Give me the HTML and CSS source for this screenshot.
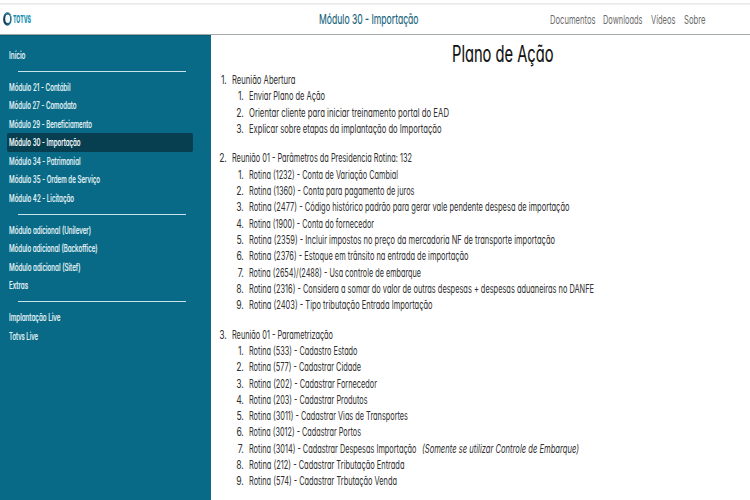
FILE: index.html
```html
<!DOCTYPE html>
<html lang="pt-BR">
<head>
<meta charset="utf-8">
<title>Módulo 30 - Importação</title>
<link rel="stylesheet" href="styles.css">
</head>
<body>
<header class="topbar">
  <div class="brand">
    <svg class="mark" viewBox="0 0 9 14"><defs><linearGradient id="g" x1="0" y1="0" x2="1" y2="1"><stop offset="0" stop-color="#174b70"/><stop offset=".5" stop-color="#173a52"/><stop offset="1" stop-color="#2198b5"/></linearGradient></defs><ellipse cx="4.4" cy="7" rx="4.3" ry="6.8" fill="url(#g)"/><path d="M1.2 3.5Q2.5 .7 5 .7Q7.6 1.6 8.2 5.5" fill="none" stroke="#4abacb" stroke-width=".8"/><ellipse cx="4.7" cy="6.7" rx="2.5" ry="4.3" fill="#f4fbfd"/></svg>
    <span class="brand-name" data-w="18">TOTVS</span>
  </div>
  <div class="module"><span data-w="99.5">Módulo 30 - Importação</span></div>
  <nav class="links"><span data-w="45.5">Documentos</span><span data-w="39.5">Downloads</span><span data-w="24.5">Vídeos</span><span data-w="21.5">Sobre</span></nav>
</header>
<div class="layout">
  <aside class="sidebar">
    <div class="item"><span data-w="16.5">Início</span></div>
    <hr>
    <div class="item"><span data-w="61.5">Módulo 21 - Contábil</span></div>
    <div class="item"><span data-w="67.5">Módulo 27 - Comodato</span></div>
    <div class="item"><span data-w="83">Módulo 29 - Beneficiamento</span></div>
    <div class="item active"><span data-w="71.5">Módulo 30 - Importação</span></div>
    <div class="item"><span data-w="71.5">Módulo 34 - Patrimonial</span></div>
    <div class="item"><span data-w="91">Módulo 35 - Ordem de Serviço</span></div>
    <div class="item"><span data-w="65">Módulo 42 - Licitação</span></div>
    <hr>
    <div class="item"><span data-w="82">Módulo adicional (Unilever)</span></div>
    <div class="item"><span data-w="88.5">Módulo adicional (Backoffice)</span></div>
    <div class="item"><span data-w="71.5">Módulo adicional (Sitef)</span></div>
    <div class="item"><span data-w="19">Extras</span></div>
    <hr>
    <div class="item"><span data-w="51.5">Implantação Live</span></div>
    <div class="item"><span data-w="29">Totvs Live</span></div>
  </aside>
  <main class="content">
    <h1><span data-w="101.5">Plano de Ação</span></h1>
    <section>
      <div class="row"><b>1.</b><span data-w="63.5">Reunião Abertura</span></div>
      <div class="row sub"><b>1.</b><span data-w="76">Enviar Plano de Ação</span></div>
      <div class="row sub"><b>2.</b><span data-w="200">Orientar cliente para iniciar treinamento portal do EAD</span></div>
      <div class="row sub"><b>3.</b><span data-w="192.5">Explicar sobre etapas da implantação do Importação</span></div>
    </section>
    <section>
      <div class="row"><b>2.</b><span data-w="180">Reunião 01 - Parâmetros da Presidencia Rotina: 132</span></div>
      <div class="row sub"><b>1.</b><span data-w="149">Rotina (1232) - Conta de Variação Cambial</span></div>
      <div class="row sub"><b>2.</b><span data-w="165.5">Rotina (1360) - Conta para pagamento de juros</span></div>
      <div class="row sub"><b>3.</b><span data-w="320.5">Rotina (2477) - Código histórico padrão para gerar vale pendente despesa de importação</span></div>
      <div class="row sub"><b>4.</b><span data-w="125">Rotina (1900) - Conta do fornecedor</span></div>
      <div class="row sub"><b>5.</b><span data-w="306">Rotina (2359) - Incluir impostos no preço da mercadoria NF de transporte importação</span></div>
      <div class="row sub"><b>6.</b><span data-w="219.5">Rotina (2376) - Estoque em trânsito na entrada de importação</span></div>
      <div class="row sub"><b>7.</b><span data-w="172">Rotina (2654)/(2488) - Usa controle de embarque</span></div>
      <div class="row sub"><b>8.</b><span data-w="345">Rotina (2316) - Considera a somar do valor de outras despesas + despesas aduaneiras no DANFE</span></div>
      <div class="row sub"><b>9.</b><span data-w="183.5">Rotina (2403) - Tipo tributação Entrada Importação</span></div>
    </section>
    <section>
      <div class="row"><b>3.</b><span data-w="101">Reunião 01 - Parametrização</span></div>
      <div class="row sub"><b>1.</b><span data-w="108.5">Rotina (533) - Cadastro Estado</span></div>
      <div class="row sub"><b>2.</b><span data-w="112">Rotina (577) - Cadastrar Cidade</span></div>
      <div class="row sub"><b>3.</b><span data-w="128">Rotina (202) - Cadastrar Fornecedor</span></div>
      <div class="row sub"><b>4.</b><span data-w="118.5">Rotina (203) - Cadastrar Produtos</span></div>
      <div class="row sub"><b>5.</b><span data-w="159">Rotina (3011) - Cadastrar Vias de Transportes</span></div>
      <div class="row sub"><b>6.</b><span data-w="112">Rotina (3012) - Cadastrar Portos</span></div>
      <div class="row sub"><b>7.</b><span data-w="167.5">Rotina (3014) - Cadastrar Despesas Importação</span><i class="note" data-w="157">(Somente se utilizar Controle de Embarque)</i></div>
      <div class="row sub"><b>8.</b><span data-w="155.5">Rotina (212) - Cadastrar Tributação Entrada</span></div>
      <div class="row sub"><b>9.</b><span data-w="148">Rotina (574) - Cadastrar Trbutação Venda</span></div>
    </section>
  </main>
</div>
<script src="fit.js"></script>
</body>
</html>
```
FILE: styles.css
```css
* { box-sizing: border-box; }
body {
  margin: 0;
  width: 750px;
  height: 500px;
  overflow: hidden;
  display: flex;
  flex-direction: column;
  background: #fff;
  color: #303030;
  font-family: Inter, "Liberation Sans", sans-serif;
  font-feature-settings: "cv11", "ss03";
}
[data-w] { display: block; white-space: nowrap; transform-origin: 0 50%; flex: none; }
.topbar {
  height: 35px;
  flex: none;
  display: grid;
  grid-template-columns: 318.5px 231px 200.5px;
  align-items: center;
  padding-top: 4px;
  border-bottom: 1px solid #a3aaa8;
  background: linear-gradient(#fff 3px, #e9e9e9 3px, #f1f1f1 5px, #fff 5px);
}
.brand { display: flex; align-items: center; gap: 1px; padding-left: 3px; }
.mark { width: 9px; height: 14px; }
.brand-name { font-size: 10.5px; font-weight: 800; color: #168fb0; }
.module { font-size: 13.5px; color: #17647c; -webkit-text-stroke: .15px #17647c; }
.links { display: flex; gap: 8.4px; font-size: 12px; color: #6c6c6c; }
.layout { flex: 1; display: flex; min-height: 0; }
.sidebar {
  width: 211px;
  flex: none;
  background: #086a87;
  border-top: 1px solid #075b74;
  color: #e3f2f5;
  padding: 9.7px 0 0 7px;
}
.item {
  width: 186px;
  height: 18.5px;
  display: flex;
  align-items: center;
  padding-left: 2px;
  border-radius: 2px;
  font-size: 10.3px;
  font-weight: 500;
  -webkit-text-stroke: .15px #e3f2f5;
}
.active { background: #073f50; color: #fff; }
.sidebar hr {
  width: 168px;
  height: 1px;
  margin: 6.5px 0 6px 10.5px;
  border: 0;
  background: #c8e4ea;
}
.content { flex: 1; }
h1 { margin: 3px 0 0 241.3px; height: 33.8px; line-height: 32px; font-size: 22.5px; font-weight: 400; color: #111; -webkit-text-stroke: .15px #111; }
section { margin-bottom: 13.3px; }
.row { display: flex; align-items: center; height: 16.3px; font-size: 11.5px; }
.row b { width: 15.5px; margin-right: 5px; text-align: right; font-weight: 400; letter-spacing: -.3px; transform: scaleX(.75); transform-origin: 100% 50%; }
.sub { padding-left: 17px; }
.note { margin-left: 6px; }
```
FILE: fit.js
```js
function fit() {
  document.querySelectorAll('[data-w]').forEach(function (el) {
    var target = parseFloat(el.dataset.w);
    el.style.width = 'max-content';
    var natural = el.getBoundingClientRect().width;
    el.style.transform = 'scaleX(' + target / natural + ')';
    el.style.marginRight = (target - natural) + 'px';
  });
}
fit();
```
